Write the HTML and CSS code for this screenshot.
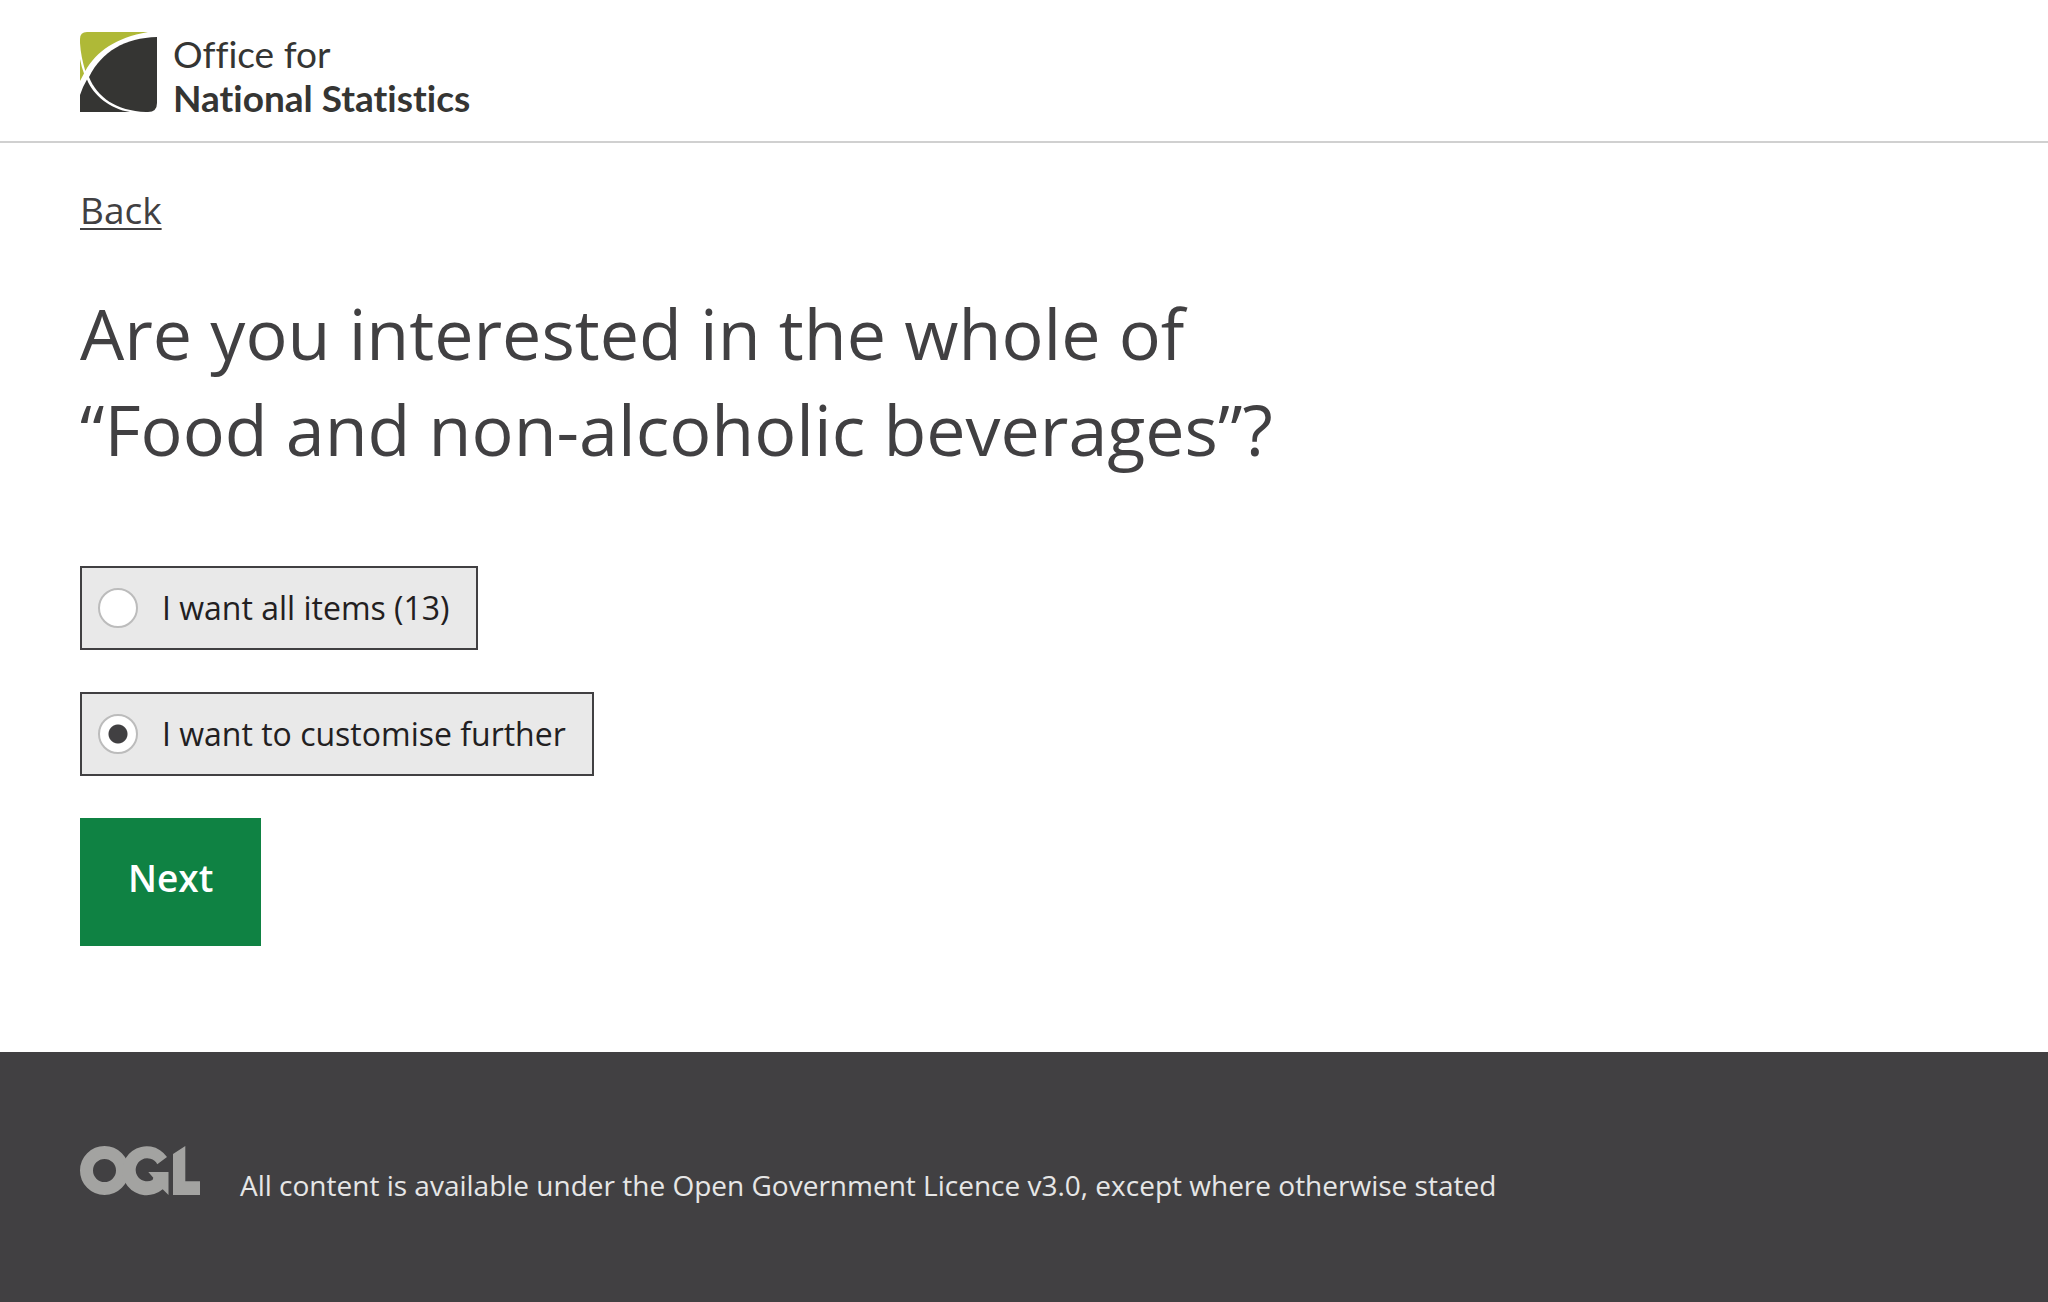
FILE: index.html
```html
<!DOCTYPE html>
<html lang="en">
<head>
<meta charset="utf-8">
<meta name="viewport" content="width=device-width, initial-scale=1">
<title>Food and non-alcoholic beverages - Office for National Statistics</title>
<link rel="stylesheet" href="styles.css">
</head>
<body>
<header class="header">
  <a class="logo" href="#">
    <svg class="logo-mark" viewBox="0 0 77 80" aria-hidden="true">
      <path fill="#afb937" d="M0 7Q0 0 7 0H68C35 6 17 19 5.3 39C2.5 30 .5 20 0 11Z"/>
      <path fill="#afb937" d="M0 27Q1.500 35 4 41.500L0 49Z"/>
      <path fill="#353533" d="M77 5C45 6 22 19 9 45C17 65 36 79 66 80H68Q77 80 77 71Z"/>
      <path fill="#353533" d="M7 47.500Q3 54 0 63V80H50C30 77 13 63 7 47.500Z"/>
    </svg>
    <span class="logo-text">Office for<strong class="logo-strong">National Statistics</strong></span>
  </a>
</header>
<main class="main">
  <a class="back" href="#">Back</a>
  <h1 class="title">Are you interested in the whole of<br>“Food and non-alcoholic beverages”?</h1>
  <form class="form">
    <label class="option" for="all"><input class="radio" type="radio" id="all" name="choice">I want all items (13)</label>
    <label class="option" for="custom"><input class="radio" type="radio" id="custom" name="choice" checked>I want to customise further</label>
    <button class="next" type="button">Next</button>
  </form>
</main>
<footer class="footer">
  <svg class="ogl" viewBox="0 0 120 50" role="img" aria-label="Open Government Licence">
    <circle cx="24.500" cy="24.500" r="18" fill="none" stroke="#a3a3a1" stroke-width="13"/>
    <path fill="#a3a3a1" d="M87 11A24.500 24.500 0 1 0 82.700 43.300L88.500 49V26H68.300L73.300 31.700L72.500 34A11.500 11.500 0 1 1 77.300 18.300Z"/>
    <path fill="#a3a3a1" d="M93 8L105.300 0V35.300H120V49H93Z"/>
  </svg>
  <p class="licence">All content is available under the Open Government Licence v3.0, except where otherwise stated</p>
</footer>
</body>
</html>
```
FILE: styles.css
```css
* {
  box-sizing: border-box;
}

body {
  margin: 0;
  min-height: 100vh;
  display: flex;
  flex-direction: column;
  background: #fff;
  color: #414042;
  font-family: "Open Sans", sans-serif;
}

.header {
  padding: 32px 80px 21px;
  border-bottom: 2px solid #d0d0d0;
}

.logo {
  display: inline-flex;
  gap: 16px;
  vertical-align: top;
  color: #353533;
  text-decoration: none;
}

.logo-mark {
  width: 77px;
  height: 80px;
}

.logo-text {
  display: flex;
  flex-direction: column;
  font-family: Lato, sans-serif;
  font-size: 37px;
  font-weight: 400;
  font-variant-ligatures: none;
  line-height: 44px;
}

.logo-strong {
  font-weight: 700;
}

.main {
  padding: 43px 80px 106px;
}

.back {
  display: inline-block;
  vertical-align: top;
  color: #414042;
  font-size: 37px;
  line-height: 48px;
  text-decoration: underline;
  text-decoration-thickness: 2px;
  text-underline-offset: 4px;
  text-decoration-skip-ink: none;
}

.title {
  margin: 51px 0 89px;
  font-size: 70px;
  font-weight: 400;
  line-height: 96px;
}

.form {
  display: flex;
  flex-direction: column;
  align-items: flex-start;
  gap: 42px;
}

.option {
  display: flex;
  align-items: center;
  gap: 24px;
  padding: 16px 26px 16px 16px;
  border: 2px solid #414042;
  background: #e9e9e9;
  color: #222021;
  font-size: 32px;
  line-height: 48px;
}

.radio {
  appearance: none;
  width: 40px;
  height: 40px;
  margin: 0;
  border: 2px solid #bcbcbc;
  border-radius: 50%;
  background: #fff;
}

.radio:checked {
  background: radial-gradient(circle, #414042 9px, #fff 10px);
}

.next {
  padding: 36px 48px 44px;
  border: 0;
  background: #0f8243;
  color: #fff;
  font-family: inherit;
  font-size: 37px;
  font-weight: 600;
  line-height: 48px;
}

.footer {
  flex: 1;
  display: flex;
  align-items: baseline;
  gap: 40px;
  padding: 94px 80px 80px;
  background: #414042;
}

.ogl {
  flex: none;
  width: 120px;
  height: 50px;
}

.licence {
  margin: 0;
  color: #e6e6e6;
  font-size: 28px;
  line-height: 40px;
}
```
